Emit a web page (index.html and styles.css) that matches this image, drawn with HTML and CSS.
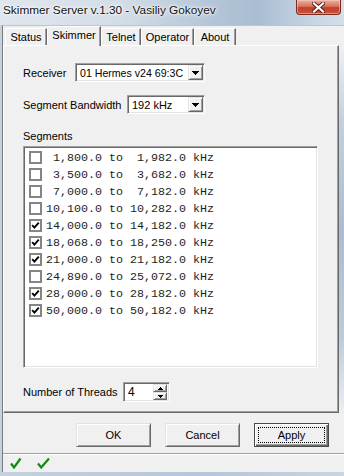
FILE: index.html
```html
<!doctype html>
<html lang="en">

<head>
    <meta charset="utf-8">
    <title>Skimmer Server v.1.30 - Vasiliy Gokoyev</title>
    <link rel="stylesheet" href="styles.css">
</head>

<body>
    <div class="window">
        <!-- Barre de titre -->
        <div class="titlebar">
            <span class="title">Skimmer Server v.1.30 - Vasiliy Gokoyev</span>
            <div class="close">
                <svg width="13" height="11" viewBox="0 0 13 11">
                    <path d="M2 1.5 L11 9.5 M11 1.5 L2 9.5" stroke="#5a1a12" stroke-width="4" stroke-linecap="square" />
                    <path d="M2 1.5 L11 9.5 M11 1.5 L2 9.5" stroke="#fff" stroke-width="2.2" stroke-linecap="square" />
                </svg>
            </div>
        </div>

        <div class="client">
            <div class="tabstrip">
                <div class="tab tab-status">Status</div>
                <div class="tab tab-skimmer active">Skimmer</div>
                <div class="tab tab-telnet">Telnet</div>
                <div class="tab tab-operator">Operator</div>
                <div class="tab tab-about">About</div>
            </div>

            <div class="panel-row">
                <div class="panel">
                    <div class="field">
                        <span class="label label-receiver">Receiver</span>
                        <div class="combo combo-receiver">
                            <span class="combo-text">01 Hermes v24 69:3C</span>
                            <span class="drop-btn">
                                <svg width="7" height="4" viewBox="0 0 7 4" shape-rendering="crispEdges">
                                    <path d="M0 0h7v1h-1v1h-1v1h-1v1h-1v-1h-1v-1h-1v-1h-1z" fill="#000" />
                                </svg>
                            </span>
                        </div>
                    </div>

                    <div class="field field-bandwidth">
                        <span class="label label-bandwidth">Segment Bandwidth</span>
                        <div class="combo combo-bandwidth">
                            <span class="combo-text">192 kHz</span>
                            <span class="drop-btn">
                                <svg width="7" height="4" viewBox="0 0 7 4" shape-rendering="crispEdges">
                                    <path d="M0 0h7v1h-1v1h-1v1h-1v1h-1v-1h-1v-1h-1v-1h-1z" fill="#000" />
                                </svg>
                            </span>
                        </div>
                    </div>

                    <div class="group-label">Segments</div>
                    <div class="listbox" id="segments">
                        <!-- les segments sont ajoutés par le script -->
                    </div>

                    <div class="field field-threads">
                        <span class="label label-threads">Number of Threads</span>
                        <div class="spinner">
                            <span class="spin-text">4</span>
                            <span class="spin-btns">
                                <span class="spin-btn">
                                    <svg width="5" height="3" viewBox="0 0 5 3" shape-rendering="crispEdges">
                                        <path d="M2 0h1v1h1v1h1v1h-5v-1h1v-1h1z" fill="#000" />
                                    </svg>
                                </span>
                                <span class="spin-btn">
                                    <svg width="5" height="3" viewBox="0 0 5 3" shape-rendering="crispEdges">
                                        <path d="M0 0h5v1h-1v1h-1v1h-1v-1h-1v-1h-1z" fill="#000" />
                                    </svg>
                                </span>
                            </span>
                        </div>
                    </div>
                </div>
                <div class="frame-edge"></div>
            </div>

            <div class="buttons">
                <button class="btn">OK</button>
                <button class="btn">Cancel</button>
                <button class="btn default"><span class="focus">Apply</span></button>
            </div>

            <div class="statusbar">
                <svg class="ok-mark" width="12" height="12" viewBox="0 0 12 12">
                    <path d="M1 6.5 L4 10.5 L10.5 1.5" stroke="#138a13" stroke-width="2.2" fill="none" />
                </svg>
                <svg class="ok-mark" width="13" height="12" viewBox="0 0 13 12">
                    <path d="M1 6.5 L4.2 10.5 L12 1.5" stroke="#138a13" stroke-width="2.2" fill="none" />
                </svg>
            </div>
        </div>
    </div>

    <script>
        const segments = [
            [" 1,800.0", " 1,982.0", false],
            [" 3,500.0", " 3,682.0", false],
            [" 7,000.0", " 7,182.0", false],
            ["10,100.0", "10,282.0", false],
            ["14,000.0", "14,182.0", true],
            ["18,068.0", "18,250.0", true],
            ["21,000.0", "21,182.0", true],
            ["24,890.0", "25,072.0", false],
            ["28,000.0", "28,182.0", true],
            ["50,000.0", "50,182.0", true]
        ];

        const list = document.getElementById("segments");
        segments.forEach(([from, to, checked]) => {
            const row = document.createElement("div");
            row.className = "seg-row";

            const box = document.createElement("span");
            box.className = "checkbox";
            if (checked) {
                box.innerHTML = '<svg width="9" height="9" viewBox="0 0 9 9"><path d="M1.2 4.2 L3.4 6.6 L7.8 1.6" stroke="#000" stroke-width="1.9" fill="none"/></svg>';
            }

            const text = document.createElement("span");
            text.className = "seg-text";
            text.textContent = `${from} to ${to} kHz`;

            row.appendChild(box);
            row.appendChild(text);
            list.appendChild(row);
        });
    </script>
</body>

</html>
```

FILE: styles.css
```css
body {
    margin: 0;
    width: 344px;
    height: 476px;
    overflow: hidden;
    font-family: "Liberation Sans", Arial, sans-serif;
    font-size: 11px;
    color: #000;
}

.window {
    height: 476px;
    display: flex;
    flex-direction: column;
    background: linear-gradient(to right, #c4d1de, #b4c6d8 60%, #c9d5e1);
}

/***** barre de titre *****/
.titlebar {
    height: 25px;
    flex: 0 0 auto;
    display: flex;
    align-items: flex-start;
    background: linear-gradient(to right, #dfe6ed 0%, #d3dde7 35%, #b3c5d7 62%, #a9bdd2 75%, #c6d4e2 90%, #d5dfe9 100%);
}

.title {
    padding-left: 3px;
    line-height: 20px;
    font-size: 11.8px;
    color: #111;
    text-shadow: 0 0 6px #fff, 0 0 3px #fff, 0 0 2px #fff;
}

.close {
    margin-left: auto;
    margin-right: 3px;
    width: 45px;
    height: 15px;
    box-sizing: border-box;
    border: 1px solid #7d2c22;
    border-top: none;
    border-radius: 0 0 4px 4px;
    background: linear-gradient(#eab0a4 0%, #d9735f 45%, #c53f2a 55%, #c9533b 100%);
    box-shadow: inset 0 0 0 1px rgba(255, 210, 200, 0.5);
    display: flex;
    align-items: center;
    justify-content: center;
}

/***** zone client *****/
.client {
    flex: 1;
    margin: 0 0 4px 2px;
    background-color: #f0f0f0;
    border-left: 1px solid #7c7c7c;
    border-top: 1px solid #bcc4cc;
    display: flex;
    flex-direction: column;
}

.tabstrip {
    height: 19px;
    flex: 0 0 auto;
    padding-left: 2px;
    display: flex;
    align-items: flex-end;
    position: relative;
    z-index: 1;
}

.tab {
    height: 17px;
    box-sizing: border-box;
    border-top: 1px solid #fff;
    border-left: 1px solid #fff;
    border-right: 1px solid #696969;
    border-top-left-radius: 2px;
    box-shadow: inset -1px 0 #a0a0a0;
    background-color: #f0f0f0;
    display: flex;
    align-items: center;
    justify-content: center;
}

.tab.active {
    height: 20px;
    margin-bottom: -1px;
    padding-bottom: 3px;
}

.tab-status { width: 42px; }
.tab-skimmer { width: 54px; }
.tab-telnet { width: 40px; }
.tab-operator { width: 53px; }
.tab-about { width: 42px; }

.panel-row {
    height: 368px;
    flex: 0 0 auto;
    display: flex;
}

.panel {
    width: 336px;
    box-sizing: border-box;
    border-top: 1px solid #fff;
    border-left: 1px solid #fff;
    border-right: 1px solid #696969;
    border-bottom: 1px solid #696969;
    box-shadow: inset -1px -1px #a0a0a0;
    padding: 17px 0 0 19px;
    display: flex;
    flex-direction: column;
}

.frame-edge {
    flex: 1;
    background: linear-gradient(#eef1f4 0%, #c3d1df 20%, #a9bdd2 50%, #bccbdb 80%, #eceff2 100%);
}

.field {
    height: 19px;
    display: flex;
    align-items: center;
}

.field-bandwidth {
    margin-top: 13px;
}

.field-threads {
    height: 20px;
    margin-top: 14px;
}

.label-receiver { width: 52px; }
.label-bandwidth { width: 104px; }
.label-threads { width: 100px; }

/* bordure creuse façon Windows classique */
.combo,
.listbox,
.spinner {
    box-sizing: border-box;
    border: 1px solid;
    border-color: #a0a0a0 #fff #fff #a0a0a0;
    box-shadow: inset 1px 1px #696969, inset -1px -1px #e3e3e3;
    background-color: #fff;
}

.combo {
    height: 19px;
    padding: 1px;
    display: flex;
    align-items: center;
}

.combo-receiver { width: 130px; }
.combo-bandwidth { width: 78px; }

.combo-text {
    flex: 1;
    padding-left: 3px;
    font-size: 10.6px;
    white-space: nowrap;
}

.combo-bandwidth .combo-text {
    font-size: 11px;
}

/* bouton en relief */
.drop-btn,
.spin-btn {
    box-sizing: border-box;
    border: 1px solid;
    border-color: #e3e3e3 #696969 #696969 #e3e3e3;
    box-shadow: inset 1px 1px #fff, inset -1px -1px #a0a0a0;
    background-color: #f0f0f0;
    display: flex;
    align-items: center;
    justify-content: center;
}

.drop-btn {
    width: 15px;
    height: 15px;
}

.group-label {
    margin-top: 16px;
    line-height: 13px;
}

.listbox {
    margin-top: 3px;
    width: 295px;
    height: 222px;
    padding: 2px 0 0 5px;
}

.seg-row {
    height: 17px;
    display: flex;
    align-items: center;
}

.checkbox {
    width: 13px;
    height: 13px;
    box-sizing: border-box;
    border: 2px solid #858585;
    background-color: #fff;
    margin-right: 4px;
    display: flex;
    align-items: center;
    justify-content: center;
}

.seg-text {
    font-family: "Liberation Mono", "Courier New", monospace;
    font-size: 11.67px;
    color: #1e1e1e;
    white-space: pre;
}

.spinner {
    width: 47px;
    height: 20px;
    padding: 1px 2px 1px 1px;
    display: flex;
    align-items: center;
}

.spin-text {
    flex: 1;
    padding-left: 3px;
    font-size: 12px;
}

.spin-btns {
    width: 14px;
    height: 16px;
    display: flex;
    flex-direction: column;
}

.spin-btn {
    flex: 1;
}

/***** boutons *****/
.buttons {
    height: 40px;
    flex: 0 0 auto;
    box-sizing: border-box;
    padding: 10px 15px 6px 0;
    display: flex;
    justify-content: flex-end;
    gap: 14px;
}

.btn {
    width: 75px;
    height: 24px;
    box-sizing: border-box;
    margin: 0;
    padding: 0;
    font-family: "Liberation Sans", Arial, sans-serif;
    font-size: 11px;
    color: #000;
    background-color: #f0f0f0;
    border: 1px solid;
    border-color: #e3e3e3 #696969 #696969 #e3e3e3;
    box-shadow: inset 1px 1px #fff, inset -1px -1px #a0a0a0;
}

.btn.default {
    border: 1px solid #4a4a4a;
    box-shadow: inset 1px 1px #fff, inset -1px -1px #696969, inset -2px -2px #a0a0a0;
    padding: 3px;
    display: flex;
}

.focus {
    flex: 1;
    border: 1px dotted #000;
    display: flex;
    align-items: center;
    justify-content: center;
}

/***** barre d'état *****/
.statusbar {
    flex: 1;
    border-top: 1px solid #a0a0a0;
    box-shadow: inset 0 1px #fff;
    padding: 3px 0 0 7px;
    display: flex;
    align-items: flex-start;
    gap: 15px;
}
```
